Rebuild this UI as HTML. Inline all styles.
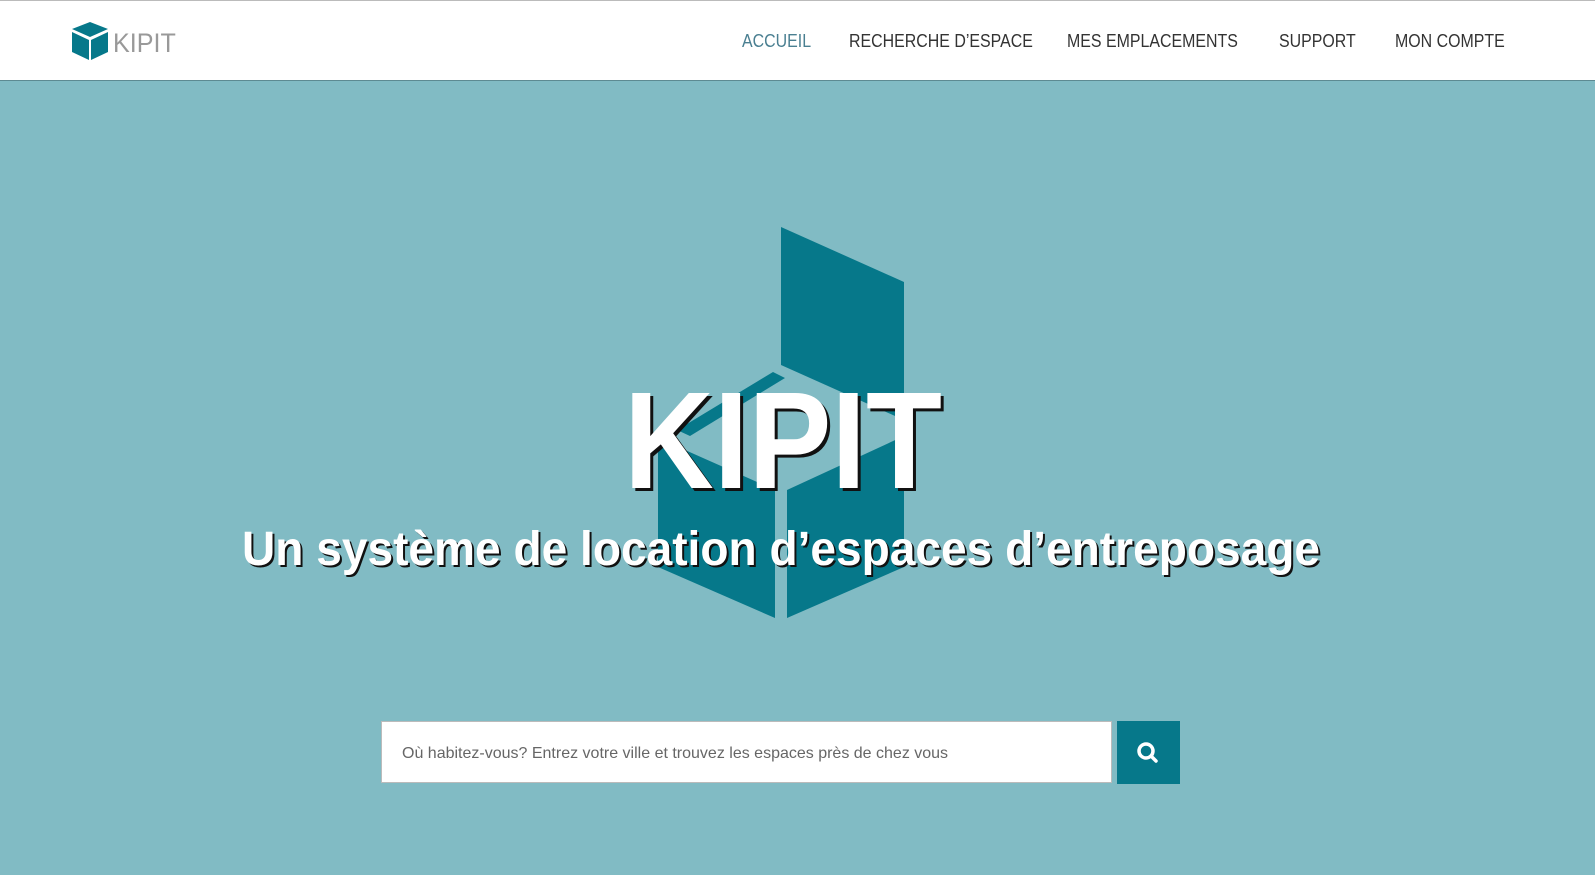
<!DOCTYPE html>
<html><head><meta charset="utf-8"><style>
*{margin:0;padding:0;box-sizing:border-box}
body{width:1595px;height:875px;overflow:hidden;background:#81bbc4;font-family:"Liberation Sans",sans-serif;position:relative}
.hdr{position:absolute;left:0;top:0;width:1595px;height:81px;background:#fff;border-top:1px solid #bbb;border-bottom:1px solid #5d8a92}
.nav a{position:absolute;top:30px;font-size:18px;color:#333;text-decoration:none;white-space:nowrap;transform:scaleX(0.885);transform-origin:left}
.inp{position:absolute;left:381px;top:721px;width:731px;height:62px;background:#fff;border:1px solid #bbb;font-size:16px;color:#666;padding:23px 0 0 20px}
.btn{position:absolute;left:1117px;top:721px;width:63px;height:63px;background:#06788a}
</style></head><body>
<div class="hdr">
<svg style="position:absolute;left:71px;top:21px" width="40" height="40" viewBox="0 0 40 40">
<polygon points="19,0 37,7 19,15 1,7" fill="#06788a"/>
<polygon points="1,10 18,18 18,38 1,30" fill="#06788a"/>
<polygon points="20,18 37,10 37,30 20,38" fill="#06788a"/>
</svg>
<div style="position:absolute;left:113px;top:27px;font-size:27px;color:#999;transform:scaleX(0.93);transform-origin:left">KIPIT</div>
<div class="nav">
<a style="left:742px;color:#4a7f91">ACCUEIL</a>
<a style="left:849px">RECHERCHE D’ESPACE</a>
<a style="left:1067px">MES EMPLACEMENTS</a>
<a style="left:1279px">SUPPORT</a>
<a style="left:1395px">MON COMPTE</a>
</div>
</div>
<svg style="position:absolute;left:0;top:0" width="1595" height="875">
<g fill="#06788a">
<polygon points="781,227 904,282 904,420 781,365"/>
<polygon points="677,430 773,372 785,378 690,436"/>
<polygon points="658,438 775,490 775,618 658,567"/>
<polygon points="787,490 904,436 904,567 787,618"/>
</g>
<g font-family="Liberation Sans, sans-serif" font-weight="bold">
<text x="627" y="491" font-size="138" textLength="318" lengthAdjust="spacingAndGlyphs" fill="#111">KIPIT</text>
<text x="624" y="488" font-size="138" textLength="318" lengthAdjust="spacingAndGlyphs" fill="#fff">KIPIT</text>
<text x="244" y="567" font-size="48" textLength="1078" lengthAdjust="spacingAndGlyphs" fill="#111">Un système de location d’espaces d’entreposage</text>
<text x="242" y="565" font-size="48" textLength="1078" lengthAdjust="spacingAndGlyphs" fill="#fff">Un système de location d’espaces d’entreposage</text>
</g>
</svg>
<div class="inp">Où habitez-vous? Entrez votre ville et trouvez les espaces près de chez vous</div>
<div class="btn"><svg width="63" height="63" viewBox="0 0 63 63"><circle cx="29" cy="30" r="7" fill="none" stroke="#fff" stroke-width="3.5"/><line x1="34" y1="35" x2="39" y2="40" stroke="#fff" stroke-width="3.5" stroke-linecap="round"/></svg></div>
</body></html>
